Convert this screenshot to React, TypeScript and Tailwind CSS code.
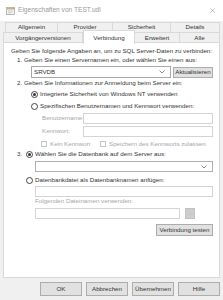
import React from "react";

function Chevron() {
  return (
    <svg width="6" height="4" viewBox="0 0 6 4" className="shrink-0">
      <polyline points="0.5,0.5 3,3 5.5,0.5" fill="none" stroke="#707070" strokeWidth="0.8" />
    </svg>
  );
}

function Radio({ checked }: { checked?: boolean }) {
  return (
    <span className="w-[7px] h-[7px] rounded-full border border-[#444] bg-white flex items-center justify-center shrink-0">
      {checked && <span className="w-[3px] h-[3px] rounded-full bg-[#333]" />}
    </span>
  );
}

function Check() {
  return <span className="w-[6px] h-[6px] border border-[#c4c4c4] bg-white shrink-0" />;
}

function Btn({ children, className = "" }: { children: React.ReactNode; className?: string }) {
  return (
    <div className={"bg-[#e1e1e1] border border-[#adadad] flex items-center justify-center text-[#333] " + className}>
      {children}
    </div>
  );
}

export default function App() {
  return (
    <div className="w-[223px] h-[300px] bg-[#f0f0f0] overflow-hidden font-['Liberation_Sans',Arial,sans-serif] text-[6.2px] leading-none text-[#333]">
      {/* Title bar */}
      <div className="h-[21px] bg-white flex items-center pl-[6px] pr-[8px]">
        <svg width="9" height="8" viewBox="0 0 9 8" className="shrink-0">
          <rect x="0.5" y="0.5" width="8" height="7" fill="#f4f4f4" stroke="#a8a8a8" strokeWidth="0.8" />
          <rect x="0.5" y="0.5" width="8" height="2" fill="#c9b48a" />
          <line x1="2" y1="4" x2="7" y2="4" stroke="#b0b0b0" strokeWidth="0.6" />
          <line x1="2" y1="5.8" x2="6" y2="5.8" stroke="#b0b0b0" strokeWidth="0.6" />
        </svg>
        <span className="ml-[3px] text-[#9a9a9a] text-[6.6px]">Eigenschaften von TEST.udl</span>
        <svg width="5" height="5" viewBox="0 0 5 5" className="ml-auto">
          <line x1="0.3" y1="0.3" x2="4.7" y2="4.7" stroke="#9a9a9a" strokeWidth="0.6" />
          <line x1="4.7" y1="0.3" x2="0.3" y2="4.7" stroke="#9a9a9a" strokeWidth="0.6" />
        </svg>
      </div>

      {/* Tabs */}
      <div className="mt-[1px] pl-[5px] pr-[3px] flex h-[10px]">
        <div className="w-[53px] border border-b-0 border-[#d9d9d9] flex items-center justify-center">Allgemein</div>
        <div className="w-[55px] border border-l-0 border-b-0 border-[#d9d9d9] flex items-center justify-center">Provider</div>
        <div className="w-[58px] border border-l-0 border-b-0 border-[#d9d9d9] flex items-center justify-center">Sicherheit</div>
        <div className="flex-1 border border-l-0 border-b-0 border-[#d9d9d9] flex items-center justify-center">Details</div>
      </div>
      <div className="px-[3px] flex h-[11px] relative z-10">
        <div className="w-[80px] border border-[#d9d9d9] flex items-center justify-center pt-[1px]">Vorgängerversionen</div>
        <div className="w-[52px] -mt-[2px] h-[14px] bg-white border border-b-0 border-[#d9d9d9] flex items-start justify-center pt-[4px]">Verbindung</div>
        <div className="w-[45px] border border-l-0 border-[#d9d9d9] flex items-center justify-center pt-[1px]">Erweitert</div>
        <div className="flex-1 border border-l-0 border-[#d9d9d9] flex items-center justify-center pt-[1px]">Alle</div>
      </div>

      {/* Panel */}
      <div className="mx-[3px] h-[236px] -mt-[1px] bg-white border border-[#d9d9d9] pr-[6px] flex flex-col">
        <div className="mt-[4px] h-[9px] ml-[7px] flex items-center whitespace-nowrap">
          Geben Sie folgende Angaben an, um zu SQL Server-Daten zu verbinden:
        </div>
        <div className="h-[8px] ml-[13px] flex items-center whitespace-nowrap">
          1. Geben Sie einen Servernamen ein, oder wählen Sie einen aus:
        </div>
        <div className="mt-[2px] h-[12px] ml-[27px] flex gap-[2px]">
          <div className="flex-1 border border-[#a8a8a8] flex items-center pl-[2px] pr-[5px]">
            <span>SRVDB</span>
            <span className="ml-auto"><Chevron /></span>
          </div>
          <Btn className="w-[40px] mt-[1px]">Aktualisieren</Btn>
        </div>
        <div className="h-[11px] ml-[13px] flex items-center whitespace-nowrap">
          2. Geben Sie Informationen zur Anmeldung beim Server ein:
        </div>
        <div className="h-[10px] ml-[27px] flex items-center gap-[2px] whitespace-nowrap">
          <Radio checked />
          <span>Integrierte Sicherheit von Windows NT verwenden</span>
        </div>
        <div className="mt-[2px] h-[10px] ml-[27px] flex items-center gap-[2px] whitespace-nowrap">
          <Radio />
          <span>Spezifischen Benutzernamen und Kennwort verwenden:</span>
        </div>
        <div className="mt-[2px] h-[11px] ml-[38px] flex items-center">
          <span className="w-[41px] text-[#a6a6a6]">Benutzername:</span>
          <div className="flex-1 h-full border border-[#d4d4d4]" />
        </div>
        <div className="mt-[2px] h-[11px] ml-[38px] flex items-center">
          <span className="w-[41px] text-[#a6a6a6]">Kennwort:</span>
          <div className="flex-1 h-full border border-[#d4d4d4]" />
        </div>
        <div className="mt-[2px] h-[10px] ml-[37px] flex items-center text-[#a6a6a6] whitespace-nowrap">
          <Check />
          <span className="ml-[3px] w-[50px]">Kein Kennwort</span>
          <Check />
          <span className="ml-[3px]">Speichern des Kennworts zulassen</span>
        </div>
        <div className="h-[10px] ml-[13px] flex items-center whitespace-nowrap">
          <span className="w-[9px]">3.</span>
          <Radio checked />
          <span className="ml-[2px]">Wählen Sie die Datenbank auf dem Server aus:</span>
        </div>
        <div className="mt-[2px] h-[11px] ml-[31px] border border-[#b0b0b0] flex items-center justify-end pr-[5px]">
          <Chevron />
        </div>
        <div className="mt-[3px] h-[10px] ml-[22px] flex items-center gap-[2px] whitespace-nowrap">
          <Radio />
          <span>Datenbankdatei als Datenbanknamen anfügen:</span>
        </div>
        <div className="mt-[1px] h-[11px] ml-[31px] border border-[#d4d4d4]" />
        <div className="h-[8px] ml-[31px] flex items-center text-[#a6a6a6] whitespace-nowrap">
          Folgenden Dateinamen verwenden:
        </div>
        <div className="mt-[3px] h-[11px] ml-[31px] flex items-center">
          <div className="w-[145px] h-full border border-[#d4d4d4]" />
          <div className="ml-[5px] w-[10px] h-full bg-[#cdcdcd] border border-[#c2c2c2] flex items-center justify-center text-[#b5b5b5]">...</div>
        </div>
        <div className="mt-[5px] flex justify-end">
          <Btn className="w-[57px] h-[12px]">Verbindung testen</Btn>
        </div>
      </div>

      {/* Bottom buttons */}
      <div className="mt-[4px] flex justify-end gap-[4px] pr-[3px]">
        <Btn className="w-[42px] h-[14px]">OK</Btn>
        <Btn className="w-[42px] h-[14px]">Abbrechen</Btn>
        <Btn className="w-[42px] h-[14px]">Übernehmen</Btn>
        <Btn className="w-[42px] h-[14px]">Hilfe</Btn>
      </div>
    </div>
  );
}
